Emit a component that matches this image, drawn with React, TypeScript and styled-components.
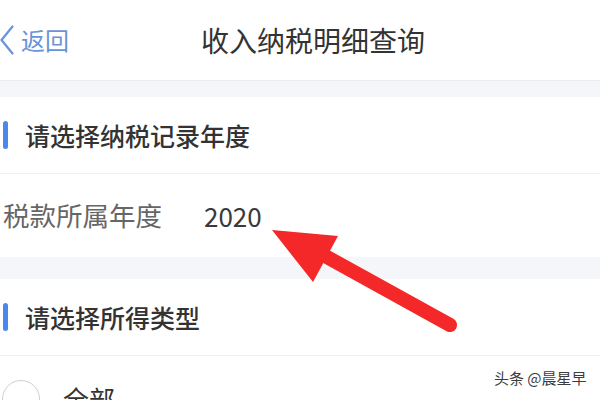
import React from "react";
import styled, { createGlobalStyle } from "styled-components";

const GlobalStyle = createGlobalStyle`
  html, body {
    margin: 0;
    padding: 0;
    background: #ffffff;
  }
  body {
    font-family: "Noto Sans CJK SC", "Noto Sans", sans-serif;
    overflow: hidden;
  }
`;

const Page = styled.div`
  position: relative;
  width: 600px;
  height: 400px;
  overflow: hidden;
  background: #ffffff;
`;

const NavBar = styled.div`
  display: flex;
  align-items: center;
  height: 80px;
  border-bottom: 1px solid #ececec;
  background: #ffffff;
`;

const BackLink = styled.div`
  display: flex;
  align-items: center;
  gap: 7px;
  color: #6a93d8;
  font-size: 24px;
  line-height: 1;
`;

const Title = styled.div`
  margin-left: 132px;
  font-size: 28px;
  line-height: 1;
  color: #333333;
`;

const Gap = styled.div<{ h: number }>`
  height: ${(p) => p.h}px;
  background: #f5f6f9;
`;

const SectionHeader = styled.div`
  display: flex;
  align-items: center;
  gap: 17px;
  height: 76px;
  padding-left: 3px;
  border-bottom: 1px solid #f0f0f0;
  background: #ffffff;
`;

const Marker = styled.span`
  width: 5px;
  height: 28px;
  border-radius: 3px;
  background: #4a88ee;
`;

const HeaderText = styled.span`
  font-size: 25px;
  line-height: 1;
  font-weight: 500;
  color: #333333;
`;

const Row = styled.div<{ h: number }>`
  display: flex;
  align-items: center;
  height: ${(p) => p.h}px;
  background: #ffffff;
`;

const Label = styled.span`
  margin-left: 3px;
  font-size: 26.5px;
  line-height: 1;
  color: #666666;
`;

const Value = styled.span`
  margin-left: 42px;
  font-size: 26px;
  line-height: 1;
  color: #3a3a3a;
`;

const Radio = styled.span`
  box-sizing: border-box;
  width: 38px;
  height: 38px;
  margin-left: 2px;
  border: 1.5px solid #cfcfcf;
  border-radius: 50%;
`;

const OptionText = styled.span`
  margin-left: 23px;
  font-size: 26px;
  line-height: 1;
  color: #333333;
`;

const Watermark = styled.div`
  position: absolute;
  left: 494px;
  top: 370px;
  font-size: 15px;
  line-height: 1;
  color: #3c3c3c;
  text-shadow: 0 0 2px #ffffff, 0 0 2px #ffffff;
`;

const ArrowLayer = styled.svg`
  position: absolute;
  left: 0;
  top: 0;
  pointer-events: none;
`;

const App: React.FC = () => {
  return (
    <Page>
      <GlobalStyle />
      <NavBar>
        <BackLink>
          <svg width="14" height="30" viewBox="0 0 14 30">
            <path
              d="M12.5 1.5 L1.5 15 L12.5 28.5"
              fill="none"
              stroke="#6a93d8"
              strokeWidth="2.2"
              strokeLinecap="round"
              strokeLinejoin="round"
            />
          </svg>
          返回
        </BackLink>
        <Title>收入纳税明细查询</Title>
      </NavBar>
      <Gap h={16} />
      <SectionHeader>
        <Marker />
        <HeaderText>请选择纳税记录年度</HeaderText>
      </SectionHeader>
      <Row h={83}>
        <Label>税款所属年度</Label>
        <Value>2020</Value>
      </Row>
      <Gap h={22} />
      <SectionHeader>
        <Marker />
        <HeaderText>请选择所得类型</HeaderText>
      </SectionHeader>
      <Row h={86}>
        <Radio />
        <OptionText>全部</OptionText>
      </Row>
      <ArrowLayer width="600" height="400" viewBox="0 0 600 400">
        <line
          x1="450"
          y1="325"
          x2="318"
          y2="252"
          stroke="#f42828"
          strokeWidth="14"
          strokeLinecap="round"
        />
        <polygon points="272,230 338,236 313,282" fill="#f42828" />
      </ArrowLayer>
      <Watermark>头条 @晨星早</Watermark>
    </Page>
  );
};

export default App;
